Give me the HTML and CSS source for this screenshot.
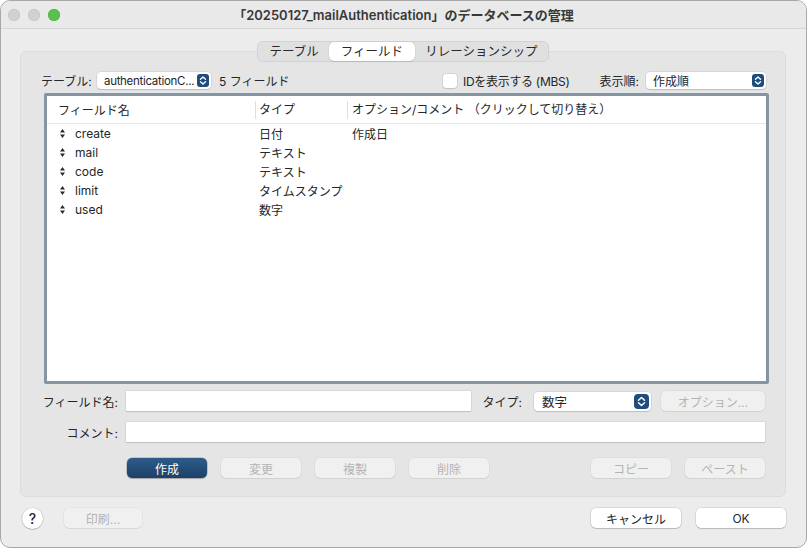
FILE: index.html
```html
<!DOCTYPE html>
<html lang="ja">
<head>
<meta charset="UTF-8">
<title>データベースの管理</title>
<link rel="stylesheet" href="styles.css">
</head>
<body>

<div class="window">
  <div class="titlebar">
    <div class="lights">
      <span class="light"></span>
      <span class="light"></span>
      <span class="light green"></span>
    </div>
    <div class="title">「20250127_mailAuthentication」のデータベースの管理</div>
    <div></div>
  </div>

  <div class="panel">
    <div class="tabs">
      <span class="tab">テーブル</span>
      <span class="tab active">フィールド</span>
      <span class="tab">リレーションシップ</span>
    </div>

    <div class="toolbar">
      <span class="tb-label">テーブル:</span>
      <div class="popup popup-table">
        <span class="popup-text">authenticationC...</span>
        <span class="stepper"><svg width="12" height="13" viewBox="0 0 12 13"><path d="M3.5 5.2 6 2.9 8.5 5.2M3.5 7.8 6 10.1 8.5 7.8" fill="none" stroke="#fff" stroke-width="1.4" stroke-linecap="round" stroke-linejoin="round"/></svg></span>
      </div>
      <span class="count">5 フィールド</span>
      <span class="spacer"></span>
      <span class="checkbox"></span>
      <span class="check-label">IDを表示する (MBS)</span>
      <span class="sort-label">表示順:</span>
      <div class="popup popup-sort">
        <span class="popup-text">作成順</span>
        <span class="stepper"><svg width="12" height="13" viewBox="0 0 12 13"><path d="M3.5 5.2 6 2.9 8.5 5.2M3.5 7.8 6 10.1 8.5 7.8" fill="none" stroke="#fff" stroke-width="1.4" stroke-linecap="round" stroke-linejoin="round"/></svg></span>
      </div>
    </div>

    <div class="table">
      <div class="thead">
        <div class="col1">フィールド名</div>
        <div class="col2 sep">タイプ</div>
        <div class="col3 sep">オプション/コメント （クリックして切り替え）</div>
      </div>
      <div class="row">
        <div class="col1"><span class="grip"><svg width="5" height="9" viewBox="0 0 5 9"><path d="M2.5 0 5 3.6H0ZM2.5 9 0 5.4H5Z" fill="#2a2a2a"/></svg></span>create</div>
        <div class="col2">日付</div>
        <div class="col3">作成日</div>
      </div>
      <div class="row">
        <div class="col1"><span class="grip"><svg width="5" height="9" viewBox="0 0 5 9"><path d="M2.5 0 5 3.6H0ZM2.5 9 0 5.4H5Z" fill="#2a2a2a"/></svg></span>mail</div>
        <div class="col2">テキスト</div>
        <div class="col3"></div>
      </div>
      <div class="row">
        <div class="col1"><span class="grip"><svg width="5" height="9" viewBox="0 0 5 9"><path d="M2.5 0 5 3.6H0ZM2.5 9 0 5.4H5Z" fill="#2a2a2a"/></svg></span>code</div>
        <div class="col2">テキスト</div>
        <div class="col3"></div>
      </div>
      <div class="row">
        <div class="col1"><span class="grip"><svg width="5" height="9" viewBox="0 0 5 9"><path d="M2.5 0 5 3.6H0ZM2.5 9 0 5.4H5Z" fill="#2a2a2a"/></svg></span>limit</div>
        <div class="col2">タイムスタンプ</div>
        <div class="col3"></div>
      </div>
      <div class="row">
        <div class="col1"><span class="grip"><svg width="5" height="9" viewBox="0 0 5 9"><path d="M2.5 0 5 3.6H0ZM2.5 9 0 5.4H5Z" fill="#2a2a2a"/></svg></span>used</div>
        <div class="col2">数字</div>
        <div class="col3"></div>
      </div>
    </div>

    <div class="form-row">
      <label class="form-label">フィールド名:</label>
      <div class="field"></div>
      <label class="type-label">タイプ:</label>
      <div class="popup popup-type">
        <span class="popup-text">数字</span>
        <span class="stepper big"><svg width="15" height="15" viewBox="0 0 15 15"><path d="M4.5 6.3 7.5 3.5 10.5 6.3M4.5 8.7 7.5 11.5 10.5 8.7" fill="none" stroke="#fff" stroke-width="1.5" stroke-linecap="round" stroke-linejoin="round"/></svg></span>
      </div>
      <button class="btn disabled btn-option">オプション...</button>
    </div>

    <div class="form-row second">
      <label class="form-label">コメント:</label>
      <div class="field"></div>
    </div>

    <div class="btn-row">
      <button class="btn primary">作成</button>
      <button class="btn disabled">変更</button>
      <button class="btn disabled">複製</button>
      <button class="btn disabled">削除</button>
      <span class="spacer"></span>
      <button class="btn disabled">コピー</button>
      <button class="btn disabled">ペースト</button>
    </div>
  </div>

  <div class="footer">
    <button class="help">?</button>
    <button class="btn disabled btn-print">印刷...</button>
    <span class="spacer"></span>
    <button class="btn normal">キャンセル</button>
    <button class="btn normal">OK</button>
  </div>
</div>

</body>
</html>
```

FILE: styles.css
```css
body {
  margin: 0;
  background-color: #ffffff;
  font-family: Inter, "Noto Sans CJK JP", sans-serif;
  font-size: 12px;
  color: #262626;
}
.window {
  width: 807px;
  height: 548px;
  box-sizing: border-box;
  border: 1px solid #a8a8a8;
  border-radius: 10px;
  background-color: #ececec;
  overflow: hidden;
}
.titlebar {
  height: 27px;
  border-bottom: 1px solid #d6d6d6;
  background-color: #e9e9e9;
  display: grid;
  grid-template-columns: 1fr auto 1fr;
  align-items: center;
}
.lights {
  display: flex;
  gap: 8px;
  padding-left: 7px;
}
.light {
  width: 12px;
  height: 12px;
  border-radius: 50%;
  background-color: #d1d1d1;
  box-shadow: inset 0 0 0 0.5px #c0c0c0;
}
.light.green {
  background-color: #5ac04f;
  box-shadow: inset 0 0 0 0.5px #4aa841;
}
.title {
  font-size: 13px;
  font-weight: 600;
  color: #383838;
}

.panel {
  margin: 22px 20px 0 19px;
  height: 446px;
  box-sizing: border-box;
  border: 1px solid #dcdcdc;
  border-radius: 6px;
  background-color: #e5e5e5;
  display: flex;
  flex-direction: column;
}
.tabs {
  align-self: center;
  margin-top: -11px;
  height: 21px;
  box-sizing: border-box;
  display: flex;
  align-items: center;
  padding: 0 1px;
  border: 1px solid #d2d2d2;
  border-radius: 6px;
  background-color: #e0e0e0;
  font-size: 12.5px;
  color: #2a2a2a;
}
.tab {
  height: 19px;
  line-height: 19px;
  padding: 0 10px;
}
.tab:first-child {
  padding: 0 10px 0 11px;
}
.tab.active {
  background-color: #ffffff;
  border-radius: 5px;
  box-shadow: 0 0 1px rgba(0, 0, 0, 0.25), 0 1px 1px rgba(0, 0, 0, 0.1);
  padding: 0 12px;
}

.toolbar {
  margin-top: 10px;
  height: 17px;
  display: flex;
  align-items: center;
  padding: 0 19px 0 20px;
}
.tb-label {
  width: 56px;
}
.popup {
  height: 17px;
  box-sizing: border-box;
  background-color: #ffffff;
  border-radius: 4px;
  box-shadow: 0 0 0 0.5px rgba(0, 0, 0, 0.12), 0 1px 1px rgba(0, 0, 0, 0.12);
  display: flex;
  align-items: center;
  padding: 0 2px 0 7px;
}
.popup-text {
  flex: 1;
  white-space: nowrap;
  overflow: hidden;
}
.stepper {
  width: 12px;
  height: 13px;
  border-radius: 3px;
  background-color: #1e4d7d;
  display: flex;
}
.stepper.big {
  width: 15px;
  height: 15px;
  border-radius: 4px;
}
.popup-table {
  width: 114px;
  font-size: 11.5px;
  letter-spacing: -0.3px;
}
.count {
  margin-left: 8px;
}
.spacer {
  flex: 1;
}
.checkbox {
  width: 14px;
  height: 14px;
  box-sizing: border-box;
  background-color: #ffffff;
  border-radius: 3px;
  box-shadow: 0 0 0 0.5px rgba(0, 0, 0, 0.15), 0 1px 1px rgba(0, 0, 0, 0.08);
  margin-right: 6px;
}
.check-label {
  margin-right: 30px;
  letter-spacing: -0.3px;
}
.sort-label {
  margin-right: 7px;
}
.popup-sort {
  width: 120px;
}

.table {
  margin: 4px 16px 0 23px;
  height: 291px;
  box-sizing: border-box;
  border: 3px solid #8595a4;
  border-radius: 2px;
  background-color: #ffffff;
}
.thead {
  height: 28px;
  box-sizing: border-box;
  border-bottom: 1px solid #e8e8e8;
  display: flex;
  align-items: center;
}
.col1 {
  width: 208px;
  box-sizing: border-box;
  display: flex;
  align-items: center;
}
.col2 {
  width: 92px;
  box-sizing: border-box;
  padding-left: 4px;
}
.col3 {
  flex: 1;
  padding-left: 5px;
}
.thead .col1 {
  padding-left: 11px;
}
.thead .sep {
  border-left: 1px solid #dedede;
  line-height: 18px;
}
.thead .col2 {
  padding-left: 3px;
}
.thead .col3 {
  padding-left: 4px;
}
.row {
  height: 19px;
  display: flex;
  align-items: center;
}
.grip {
  width: 28px;
  box-sizing: border-box;
  padding-left: 13px;
  display: flex;
}

.form-row {
  margin-top: 7px;
  height: 20px;
  display: flex;
  align-items: center;
  padding-right: 20px;
}
.form-row.second {
  margin-top: 11px;
}
.form-label {
  width: 97px;
  text-align: right;
  margin-right: 8px;
}
.field {
  flex: 1;
  height: 20px;
  background-color: #ffffff;
  box-shadow: 0 0 0 0.5px rgba(0, 0, 0, 0.1), 0 1px 1px rgba(0, 0, 0, 0.1);
}
.type-label {
  margin: 0 12px;
}
.popup-type {
  width: 117px;
  height: 19px;
  font-size: 12.5px;
  padding-left: 8px;
}

.btn {
  flex: none;
  height: 20px;
  width: 80px;
  padding: 0;
  border: none;
  border-radius: 5px;
  font-family: inherit;
  font-size: 12px;
  color: #262626;
  background-color: #ffffff;
}
.btn.disabled {
  background-color: #f0f0f0;
  color: #b4b4b4;
  box-shadow: 0 0 0 0.5px rgba(0, 0, 0, 0.06), 0 1px 1px rgba(0, 0, 0, 0.06);
}
.btn.primary {
  color: #ffffff;
  background: linear-gradient(#2f5b89, #1c4069);
  box-shadow: 0 0 0 0.5px rgba(0, 0, 0, 0.3), 0 1px 1px rgba(0, 0, 0, 0.15);
}
.btn.normal {
  width: 90px;
  box-shadow: 0 0 0 0.5px rgba(0, 0, 0, 0.15), 0 1px 1px rgba(0, 0, 0, 0.15);
}
.btn.btn-option {
  margin-left: 10px;
  width: 104px;
}
.btn.btn-print {
  width: 78px;
  margin-left: 6px;
}
.btn-row {
  margin-top: 16px;
  height: 20px;
  display: flex;
  gap: 14px;
  padding: 0 20px 0 106px;
}

.footer {
  margin-top: 11px;
  height: 20px;
  display: flex;
  align-items: center;
  padding: 0 20px 0 21px;
  gap: 15px;
}
.help {
  width: 21px;
  height: 21px;
  padding: 0;
  border: none;
  border-radius: 50%;
  background-color: #ffffff;
  box-shadow: 0 0 0 0.5px rgba(0, 0, 0, 0.15), 0 1px 1px rgba(0, 0, 0, 0.15);
  font-family: inherit;
  font-size: 14px;
  font-weight: 500;
  color: #262626;
}
```
